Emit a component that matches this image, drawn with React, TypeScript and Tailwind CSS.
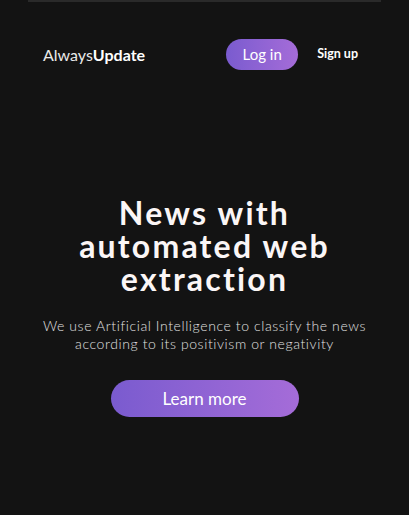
export default function App() {
    return (
        <div className="w-[409px] h-[515px] bg-[#131313] text-white flex flex-col" style={{fontFamily: 'Lato, "Open Sans", sans-serif'}}>
            <div className="mx-[28px] h-[2px] bg-[#2a2a2a]" />

            <header className="flex items-center justify-between pl-[43px] pr-[51px] mt-[37px]">
                <div className="text-[16px] text-[#e9e9e9]">
                    Always<span className="font-bold text-white">Update</span>
                </div>
                <nav className="flex items-center gap-[19px]">
                    <button className="w-[72px] h-[31px] rounded-full bg-gradient-to-r from-[#7a5bcf] to-[#a56cd8] text-[15px] text-white">
                        Log in
                    </button>
                    <button className="text-[12.5px] font-bold text-white">Sign up</button>
                </nav>
            </header>

            <main className="flex flex-col items-center text-center mt-[126px]">
                <h1 className="text-[32px] font-bold leading-[33px] tracking-[2.2px] text-[#fbf6f6] w-[300px]">
                    News with automated web extraction
                </h1>
                <p className="mt-[22px] text-[14px] leading-[18px] font-light tracking-[0.6px] text-[#e0e0e0] w-[340px]">
                    We use Artificial Intelligence to classify the news according to its positivism or negativity
                </p>
                <button className="mt-[27px] w-[188px] h-[37px] rounded-full bg-gradient-to-r from-[#7a5bcf] to-[#a56cd8] text-[17px] text-white">
                    Learn more
                </button>
            </main>
        </div>
    );
}
